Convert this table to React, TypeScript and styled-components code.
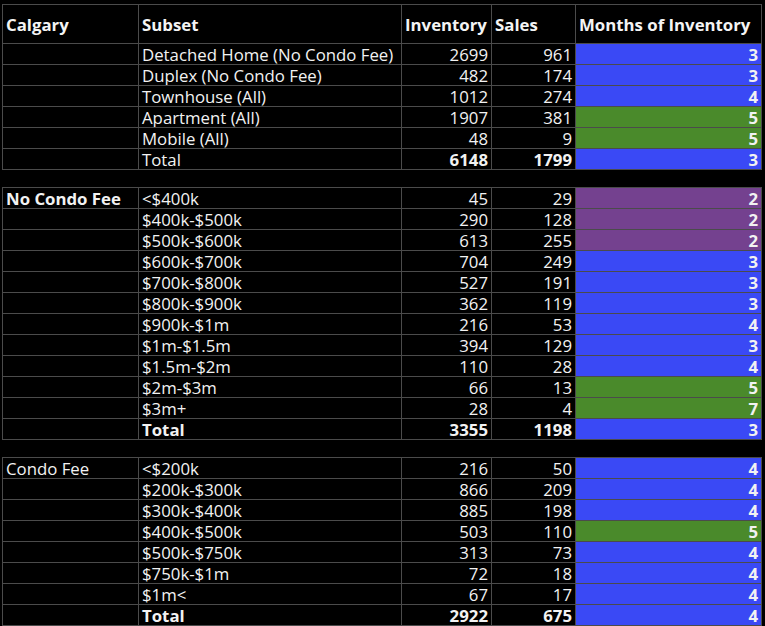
import React from 'react'
import styled, { createGlobalStyle } from 'styled-components'

const GlobalStyle = createGlobalStyle`
  html, body {
    margin: 0;
    padding: 0;
    background: #000;
  }
  body {
    font-family: "Open Sans", "Noto Sans", sans-serif;
    color: #f2f2f2;
  }
`

type Level = 'blue' | 'green' | 'purple'

interface Row {
  group?: string
  groupBold?: boolean
  subset: string
  inventory: number
  sales: number
  months: number
  total?: boolean
  boldLabel?: boolean
}

const fills: Record<Level, string> = {
  blue: '#3a49f5',
  green: '#4a8a2b',
  purple: '#74418f',
}

const levelOf = (m: number): Level => (m <= 2 ? 'purple' : m >= 5 ? 'green' : 'blue')

const calgary: Row[] = [
  { subset: 'Detached Home (No Condo Fee)', inventory: 2699, sales: 961, months: 3 },
  { subset: 'Duplex (No Condo Fee)', inventory: 482, sales: 174, months: 3 },
  { subset: 'Townhouse (All)', inventory: 1012, sales: 274, months: 4 },
  { subset: 'Apartment (All)', inventory: 1907, sales: 381, months: 5 },
  { subset: 'Mobile (All)', inventory: 48, sales: 9, months: 5 },
  { subset: 'Total', inventory: 6148, sales: 1799, months: 3, total: true },
]

const noCondo: Row[] = [
  { group: 'No Condo Fee', groupBold: true, subset: '<$400k', inventory: 45, sales: 29, months: 2 },
  { subset: '$400k-$500k', inventory: 290, sales: 128, months: 2 },
  { subset: '$500k-$600k', inventory: 613, sales: 255, months: 2 },
  { subset: '$600k-$700k', inventory: 704, sales: 249, months: 3 },
  { subset: '$700k-$800k', inventory: 527, sales: 191, months: 3 },
  { subset: '$800k-$900k', inventory: 362, sales: 119, months: 3 },
  { subset: '$900k-$1m', inventory: 216, sales: 53, months: 4 },
  { subset: '$1m-$1.5m', inventory: 394, sales: 129, months: 3 },
  { subset: '$1.5m-$2m', inventory: 110, sales: 28, months: 4 },
  { subset: '$2m-$3m', inventory: 66, sales: 13, months: 5 },
  { subset: '$3m+', inventory: 28, sales: 4, months: 7 },
  { subset: 'Total', inventory: 3355, sales: 1198, months: 3, total: true, boldLabel: true },
]

const condo: Row[] = [
  { group: 'Condo Fee', subset: '<$200k', inventory: 216, sales: 50, months: 4 },
  { subset: '$200k-$300k', inventory: 866, sales: 209, months: 4 },
  { subset: '$300k-$400k', inventory: 885, sales: 198, months: 4 },
  { subset: '$400k-$500k', inventory: 503, sales: 110, months: 5 },
  { subset: '$500k-$750k', inventory: 313, sales: 73, months: 4 },
  { subset: '$750k-$1m', inventory: 72, sales: 18, months: 4 },
  { subset: '$1m<', inventory: 67, sales: 17, months: 4 },
  { subset: 'Total', inventory: 2922, sales: 675, months: 4, total: true, boldLabel: true },
]

function Section({ rows, header }: { rows: Row[]; header?: boolean }) {
  return (
    <Table>
      <colgroup>
        <col style={{ width: 136 }} />
        <col style={{ width: 263 }} />
        <col style={{ width: 90 }} />
        <col style={{ width: 84 }} />
        <col style={{ width: 186 }} />
      </colgroup>
      {header && (
        <thead>
          <HeadRow>
            <HeadCell>Calgary</HeadCell>
            <HeadCell>Subset</HeadCell>
            <HeadCell>Inventory</HeadCell>
            <HeadCell>Sales</HeadCell>
            <HeadCell>Months of Inventory</HeadCell>
          </HeadRow>
        </thead>
      )}
      <tbody>
        {rows.map((r) => (
          <BodyRow key={r.subset}>
            <Cell $bold={r.groupBold}>{r.group ?? ''}</Cell>
            <Cell $bold={r.boldLabel}>{r.subset}</Cell>
            <Cell $right $bold={r.total}>{r.inventory}</Cell>
            <Cell $right $bold={r.total}>{r.sales}</Cell>
            <Cell $right $bold $fill={fills[levelOf(r.months)]}>{r.months}</Cell>
          </BodyRow>
        ))}
      </tbody>
    </Table>
  )
}

export default function App() {
  return (
    <>
      <GlobalStyle />
      <Page>
        <Section rows={calgary} header />
        <Section rows={noCondo} />
        <Section rows={condo} />
      </Page>
    </>
  )
}

const Page = styled.div`
  display: flex;
  flex-direction: column;
  gap: 17px;
  padding: 4px 0 0 2px;
  width: 765px;
  height: 626px;
  box-sizing: border-box;
  overflow: hidden;
`

const Table = styled.table`
  border-collapse: collapse;
  table-layout: fixed;
  width: 759px;
  font-size: 16.8px;
`

const HeadRow = styled.tr`
  height: 39px;
`

const HeadCell = styled.th`
  border: 1px solid #4b4b4b;
  padding: 0 3px;
  text-align: left;
  font-weight: 700;
  white-space: nowrap;
  overflow: hidden;
  background: #000;
  color: #f4f4f4;
`

const BodyRow = styled.tr`
  height: 21px;
`

const Cell = styled.td<{ $right?: boolean; $bold?: boolean; $fill?: string }>`
  border: 1px solid #4b4b4b;
  padding: 0 3px;
  height: 20px;
  line-height: 19px;
  box-sizing: border-box;
  white-space: nowrap;
  overflow: hidden;
  text-align: ${(p) => (p.$right ? 'right' : 'left')};
  font-weight: ${(p) => (p.$bold ? 700 : 400)};
  background: ${(p) => p.$fill ?? '#000'};
  color: #f2f2f2;
`
